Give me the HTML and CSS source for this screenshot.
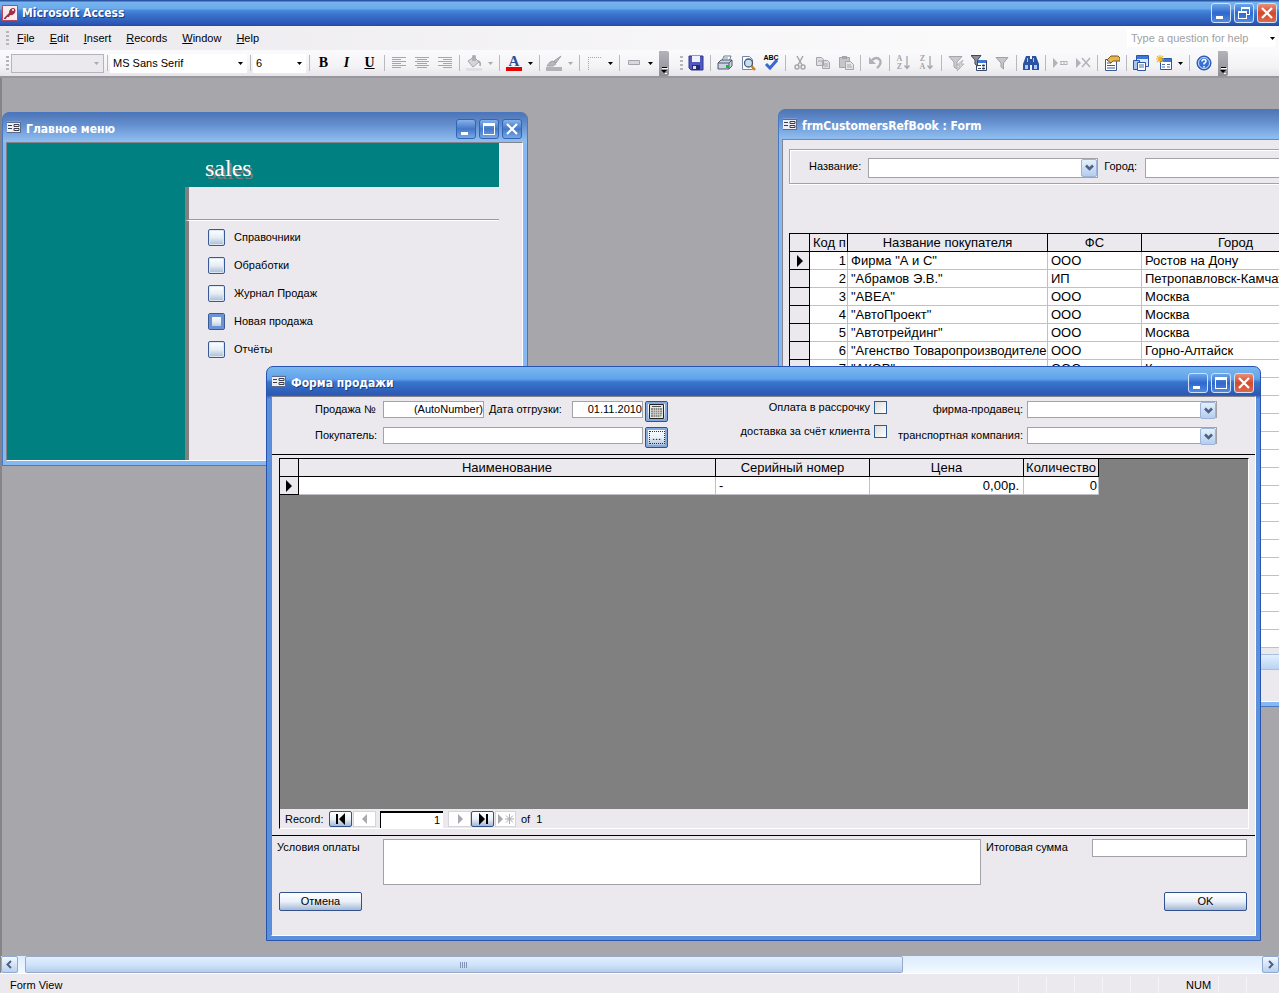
FILE: index.html
```html
<!DOCTYPE html>
<html lang="ru">
<head>
<meta charset="utf-8">
<title>Microsoft Access</title>
<link rel="stylesheet" href="styles.css">
</head>
<body>
<svg class="defs" aria-hidden="true">
  <symbol id="min" viewBox="0 0 20 20"><path d="M5 13h7v3H5z" fill="#fff"/></symbol>
  <symbol id="max" viewBox="0 0 20 20"><path d="M4 4h12v12H4zM5 7v8h10V7z" fill="#fff" fill-rule="evenodd"/></symbol>
  <symbol id="restore" viewBox="0 0 20 20"><path d="M7 4h9v8h-3v-1h2V6H8v2H7zM4 8h9v8H4zM5 10v5h7v-5z" fill="#fff" fill-rule="evenodd"/></symbol>
  <symbol id="close" viewBox="0 0 20 20"><path d="M5 5l10 10M15 5L5 15" stroke="#fff" stroke-width="2.200"/></symbol>
  <symbol id="form" viewBox="0 0 14 12"><path d="M0 0h14v12H0z" fill="#5d6c8c"/><path d="M0 2h13v9H0z" fill="#eeeef4"/><path d="M0 0h14v1H0z" fill="#7a9ad4"/><path d="M1 4.500h4M1 7.500h4M7 3.500h5v2H7zM7 7.500h5v2H7z" stroke="#3a3f4c" fill="none"/></symbol>
  <symbol id="chev" viewBox="0 0 15 15"><path d="M4 5.500l3.500 3.500L11 5.500" stroke="#4d6185" stroke-width="2.600" fill="none"/></symbol>
  <symbol id="caret" viewBox="0 0 5 3"><path d="M0 0h5L2.500 3z" fill="currentColor"/></symbol>
  <symbol id="more" viewBox="0 0 10 25"><path d="M3 16.500h5" stroke="#000"/><path d="M3 17.500h6M6 22.500h2" stroke="#fff"/><path d="M2 19h6l-3 3z" fill="#000"/></symbol>
  <symbol id="aleft" viewBox="0 0 16 16"><path d="M1 2.500h14M1 4.500h9M1 6.500h14M1 8.500h9M1 10.500h14M1 12.500h9" stroke="#a5a5ab"/></symbol>
  <symbol id="acenter" viewBox="0 0 16 16"><path d="M1 2.500h14M3 4.500h10M1 6.500h14M3 8.500h10M1 10.500h14M3 12.500h10" stroke="#a5a5ab"/></symbol>
  <symbol id="aright" viewBox="0 0 16 16"><path d="M1 2.500h14M6 4.500h9M1 6.500h14M6 8.500h9M1 10.500h14M6 12.500h9" stroke="#a5a5ab"/></symbol>
  <symbol id="bucket" viewBox="0 0 16 16"><path d="M2 6l6-4 5 5-6 5z" fill="#d5d5da" stroke="#a5a5ab"/><path d="M7 6V1h2v5M12 6q3 1 2 5" stroke="#a5a5ab" fill="none" stroke-width="1.500"/><path d="M0 13h16v3H0z" fill="#e0e0e4"/></symbol>
  <symbol id="brush" viewBox="0 0 16 16"><path d="M15 1L8 6l2 2zM7 6L4 7l-3 4h6l3-2z" fill="#b8b8be" stroke="#a0a0a6"/><path d="M0 12h16v4H0z" fill="#b2b2b8"/></symbol>
  <symbol id="border" viewBox="0 0 16 16"><path d="M2 2.500h13M2.500 2v13" stroke="#a5a5ab" stroke-dasharray="1 1" fill="none"/></symbol>
  <symbol id="effect" viewBox="0 0 16 16"><path d="M2.500 5.500h11v4h-11z" fill="#d8d8de" stroke="#a5a5ab"/></symbol>
  <symbol id="save" viewBox="0 0 16 16"><path d="M1 1h14v14H3l-2-2z" fill="#5159c0" stroke="#30368c"/><path d="M4 1h8v6H4z" fill="#eef2fc"/><path d="M4 10h8v5H4z" fill="#252a73"/><path d="M5 11h3v3H5z" fill="#dfe4fa"/></symbol>
  <symbol id="print" viewBox="0 0 16 16"><path d="M5 6l2-5h7l-2 6z" fill="#fff" stroke="#6d7b96"/><path d="M1 8l3-3h11v6l-3 3H1z" fill="#cbd4e2" stroke="#4e596e"/><path d="M1 8h11v6M12 8l3-3" stroke="#4e596e" fill="none"/><path d="M9 10h3v3H9z" fill="#22b333"/><path d="M7 3h4M6.500 5h4" stroke="#8694ad"/></symbol>
  <symbol id="preview" viewBox="0 0 16 16"><path d="M2.500 1.500h7l3 3v10h-10z" fill="#fff" stroke="#7484a8"/><circle cx="8.500" cy="8" r="4" fill="#c5e0f4" stroke="#4b5870" stroke-width="1.300"/><path d="M11.500 11l3.500 4" stroke="#c4822a" stroke-width="2.500"/></symbol>
  <symbol id="cut" viewBox="0 0 16 16"><path d="M5 1l5 9M11 1L6 10" stroke="#a5a5ab" stroke-width="1.500"/><circle cx="5" cy="12" r="2" fill="none" stroke="#a5a5ab" stroke-width="1.500"/><circle cx="11" cy="12" r="2" fill="none" stroke="#a5a5ab" stroke-width="1.500"/></symbol>
  <symbol id="copy" viewBox="0 0 16 16"><path d="M1.500 2.500h5l2 2v6h-7zM7.500 5.500h5l2 2v6h-7z" fill="#dedee2" stroke="#a5a5ab"/><path d="M3 6h4M9 9h4M9 11h4" stroke="#a5a5ab"/></symbol>
  <symbol id="paste" viewBox="0 0 16 16"><path d="M1.500 2.500h10v10h-10z" fill="#c5c5ca" stroke="#a5a5ab"/><path d="M4 1h5v3H4z" fill="#a5a5ab"/><path d="M7.500 6.500h5l3 3v5h-8z" fill="#e5e5e8" stroke="#a5a5ab"/><path d="M9 10h4M9 12h5" stroke="#a5a5ab"/></symbol>
  <symbol id="undo" viewBox="0 0 16 16"><path d="M5 5q5-4 8 0 2 4-3 8" stroke="#b0b0b8" stroke-width="2.300" fill="none"/><path d="M2 2v7h7z" fill="#b0b0b8"/></symbol>
  <symbol id="funbolt" viewBox="0 0 16 16"><path d="M1 1.500h13L9 7v7l-3-2V7z" fill="#c9c9ce" stroke="#a5a5ab"/><path d="M15 5l-6 5h3l-3 6 7-7h-3z" fill="#d5d5da" stroke="#a5a5ab" stroke-width=".7"/></symbol>
  <symbol id="funform" viewBox="0 0 16 16"><path d="M5.500 5.500h10v10h-10z" fill="#fff" stroke="#334766"/><path d="M6 5h9v3H6z" fill="#3d77d8"/><path d="M7 10.500h3M7 13.500h3M11.500 10h2v1h-2zM11.500 13h2v1h-2z" stroke="#334766"/><path d="M0 .5h10L6.500 5v6L4 9V5z" fill="#8b8f98" stroke="#44484f"/></symbol>
  <symbol id="funnel" viewBox="0 0 16 16"><path d="M2 2.500h12L9.500 8v6L7 12V8z" fill="#c5c5ca" stroke="#a0a0a6"/></symbol>
  <symbol id="find" viewBox="0 0 16 16"><path d="M3 1h4v3h2V1h4l3 8v6H9v-5H7v5H0V9z" fill="#2a52a0"/><path d="M2 10h3v4H2zM11 10h3v4h-3zM4 3h1v4H4zM10 3h1v4h-1z" fill="#a9c8f5"/></symbol>
  <symbol id="newrec" viewBox="0 0 16 16"><path d="M1 3l5 5-5 5z" fill="#b2b2b8"/><path d="M8 6.500h7M8 9.500h7M9 6v4M12 6v4M15 6v4" stroke="#b2b2b8"/></symbol>
  <symbol id="delrec" viewBox="0 0 16 16"><path d="M1 3l5 5-5 5z" fill="#b2b2b8"/><path d="M7 3l8 9M15 3l-8 9" stroke="#b2b2b8" stroke-width="1.500"/></symbol>
  <symbol id="props" viewBox="0 0 16 16"><path d="M1.500 4.500h11v11h-11z" fill="#fff" stroke="#3e5c94"/><path d="M3 8h4M3 10.500h8M3 13h8" stroke="#3e5c94"/><path d="M3 5l4-4h7l2 2v3H9L7 8z" fill="#e8b552" stroke="#7a5a1c"/></symbol>
  <symbol id="dbwin" viewBox="0 0 16 16"><path d="M3.500.5h12v11h-12z" fill="#dce9fb" stroke="#2d55a5"/><path d="M4 1h11v3H4z" fill="#3d77d8"/><path d="M.5 5.500h6v9h-6z" fill="#a8c6f4" stroke="#2d55a5"/><path d="M4.500 7.500h8v8h-8z" fill="#fff" stroke="#2d55a5"/><path d="M6 10h5M6 12h5" stroke="#4c6ea8"/></symbol>
  <symbol id="newobj" viewBox="0 0 16 16"><path d="M4.500 3.500h11v11h-11z" fill="#fff" stroke="#2d55a5"/><path d="M5 4h10v3H5z" fill="#3d77d8"/><path d="M6 9.500h3M11 9.500h3M6 12h3M11 12h3" stroke="#4c6ea8"/><path d="M4 0v8M0 4h8M1 1l6 6M7 1L1 7" stroke="#eeb622" stroke-width="1.200"/></symbol>
  <symbol id="help" viewBox="0 0 16 16"><circle cx="8" cy="8" r="7" fill="#3470d8" stroke="#1f4a9c"/><circle cx="8" cy="8" r="5.500" fill="none" stroke="#cfe0fb"/><path d="M6 6.500q0-2 2-2t2 1.700q0 1-2 2.300v1M8 11v1.500" stroke="#fff" stroke-width="1.500" fill="none"/></symbol>
  <symbol id="rowmark" viewBox="0 0 8 12"><path d="M1 0l6 6-6 6z"/></symbol>
  <symbol id="first" viewBox="0 0 12 12"><path d="M1 1h2v10H1zM10 0v12L4 6z" fill="currentColor"/></symbol>
  <symbol id="prev" viewBox="0 0 12 12"><path d="M8 1v10L3 6z" fill="currentColor"/></symbol>
  <symbol id="next" viewBox="0 0 12 12"><path d="M4 1v10l5-5z" fill="currentColor"/></symbol>
  <symbol id="last" viewBox="0 0 12 12"><path d="M9 1h2v10H9zM2 0v12l6-6z" fill="currentColor"/></symbol>
  <symbol id="addrec" viewBox="0 0 18 12"><path d="M1 1v10l5-5z" fill="currentColor"/><path d="M12.500 1v10M8 6h9M9 2.500l7 7M16 2.500l-7 7" stroke="currentColor"/></symbol>
</svg>

<div class="app">
  <header class="app-title">
    <svg class="app-icon" viewBox="0 0 16 16"><path d="M.5.5h15v15H.5z" fill="#fbe9ec" stroke="#b5485c"/><path d="M2 13l5-5q0-5 5-5 3 2 0 6-3 2-4 1l-1 2H5l-1 2H2z" fill="#9c3048"/><circle cx="11" cy="5" r="1" fill="#fff"/></svg>
    <h1>Microsoft Access</h1>
    <div class="wbtns">
      <button class="wbtn" aria-label="Minimize"><svg><use href="#min"/></svg></button>
      <button class="wbtn" aria-label="Restore"><svg><use href="#restore"/></svg></button>
      <button class="wbtn red" aria-label="Close"><svg><use href="#close"/></svg></button>
    </div>
  </header>

  <nav class="menubar">
    <span class="grip"></span>
    <button><u>F</u>ile</button><button><u>E</u>dit</button><button><u>I</u>nsert</button><button><u>R</u>ecords</button><button><u>W</u>indow</button><button><u>H</u>elp</button>
    <div class="ask"><input type="text" aria-label="Question" placeholder="Type a question for help"><svg class="caret"><use href="#caret"/></svg></div>
  </nav>

  <div class="toolbar">
    <span class="grip"></span>
    <div class="tcombo style off"><select aria-label="Object" disabled><option></option></select><svg class="caret"><use href="#caret"/></svg></div>
    <i class="sep"></i>
    <div class="tcombo face"><select aria-label="Font"><option>MS Sans Serif</option></select><svg class="caret"><use href="#caret"/></svg></div>
    <i class="sep"></i>
    <div class="tcombo size"><select aria-label="Font size"><option>6</option></select><svg class="caret"><use href="#caret"/></svg></div>
    <i class="sep"></i>
    <button class="tb letter">B</button><button class="tb letter italic">I</button><button class="tb letter under">U</button>
    <i class="sep"></i>
    <button class="tb" aria-label="Align left"><svg><use href="#aleft"/></svg></button><button class="tb" aria-label="Center"><svg><use href="#acenter"/></svg></button><button class="tb" aria-label="Align right"><svg><use href="#aright"/></svg></button>
    <i class="sep"></i>
    <button class="tb" aria-label="Fill color"><svg><use href="#bucket"/></svg></button><button class="drop off" aria-label="Fill list"><svg class="caret"><use href="#caret"/></svg></button>
    <i class="sep"></i>
    <button class="tb" aria-label="Font color"><svg viewBox="0 0 16 16"><text x="8" y="11" class="svg-a" text-anchor="middle">A</text><path d="M0 12h16v4H0z" fill="#e80000"/></svg></button><button class="drop" aria-label="Font color list"><svg class="caret"><use href="#caret"/></svg></button>
    <i class="sep"></i>
    <button class="tb" aria-label="Line color"><svg><use href="#brush"/></svg></button><button class="drop off" aria-label="Line color list"><svg class="caret"><use href="#caret"/></svg></button>
    <i class="sep"></i>
    <button class="tb" aria-label="Border"><svg><use href="#border"/></svg></button><button class="drop" aria-label="Border list"><svg class="caret"><use href="#caret"/></svg></button>
    <i class="sep"></i>
    <button class="tb" aria-label="Effect"><svg><use href="#effect"/></svg></button><button class="drop" aria-label="Effect list"><svg class="caret"><use href="#caret"/></svg></button>
    <button class="more" aria-label="Toolbar options"><svg><use href="#more"/></svg></button>
    <span class="grip second"></span>
    <button class="tb" aria-label="Save"><svg><use href="#save"/></svg></button>
    <i class="sep"></i>
    <button class="tb" aria-label="Print"><svg><use href="#print"/></svg></button><button class="tb" aria-label="Preview"><svg><use href="#preview"/></svg></button><button class="tb" aria-label="Spelling"><svg viewBox="0 0 16 16"><text x="8" y="5" class="svg-abc" text-anchor="middle">ABC</text><path d="M3 9l4 4 7-8" stroke="#356bd0" stroke-width="3" fill="none"/></svg></button>
    <i class="sep"></i>
    <button class="tb" aria-label="Cut"><svg><use href="#cut"/></svg></button><button class="tb" aria-label="Copy"><svg><use href="#copy"/></svg></button><button class="tb" aria-label="Paste"><svg><use href="#paste"/></svg></button>
    <i class="sep"></i>
    <button class="tb" aria-label="Undo"><svg><use href="#undo"/></svg></button>
    <i class="sep"></i>
    <button class="tb sort" aria-label="Sort ascending"><span><b>A</b><b>Z</b></span><svg viewBox="0 0 6 16"><path d="M3 1v12M.5 10.500l2.500 3 2.500-3" stroke="#a5a5ab" fill="none" stroke-width="1.300"/></svg></button><button class="tb sort" aria-label="Sort descending"><span><b>Z</b><b>A</b></span><svg viewBox="0 0 6 16"><path d="M3 1v12M.5 10.500l2.500 3 2.500-3" stroke="#a5a5ab" fill="none" stroke-width="1.300"/></svg></button>
    <i class="sep"></i>
    <button class="tb" aria-label="Filter by selection"><svg><use href="#funbolt"/></svg></button><button class="tb" aria-label="Filter by form"><svg><use href="#funform"/></svg></button><button class="tb" aria-label="Apply filter"><svg><use href="#funnel"/></svg></button>
    <i class="sep"></i>
    <button class="tb" aria-label="Find"><svg><use href="#find"/></svg></button>
    <i class="sep"></i>
    <button class="tb" aria-label="New record"><svg><use href="#newrec"/></svg></button><button class="tb" aria-label="Delete record"><svg><use href="#delrec"/></svg></button>
    <i class="sep"></i>
    <button class="tb" aria-label="Properties"><svg><use href="#props"/></svg></button>
    <i class="sep"></i>
    <button class="tb" aria-label="Database window"><svg><use href="#dbwin"/></svg></button><button class="tb" aria-label="New object"><svg><use href="#newobj"/></svg></button><button class="drop" aria-label="New object list"><svg class="caret"><use href="#caret"/></svg></button>
    <i class="sep"></i>
    <button class="tb" aria-label="Help"><svg><use href="#help"/></svg></button>
    <button class="more" aria-label="Toolbar options"><svg><use href="#more"/></svg></button>
  </div>

  <main class="desktop">
    <section class="win win-menu">
      <header class="wtitle"><svg class="wicon"><use href="#form"/></svg><h2>Главное меню</h2>
        <div class="wbtns"><button class="wbtn" aria-label="Minimize"><svg><use href="#min"/></svg></button><button class="wbtn" aria-label="Maximize"><svg><use href="#max"/></svg></button><button class="wbtn" aria-label="Close"><svg><use href="#close"/></svg></button></div>
      </header>
      <div class="wbody switchboard">
        <div class="sb-side"></div>
        <div class="sb-head">sales</div>
        <div class="sb-main">
          <div class="sb-gap"></div>
          <ul>
            <li><button id="m1"></button><label for="m1">Справочники</label></li>
            <li><button id="m2"></button><label for="m2">Обработки</label></li>
            <li><button id="m3"></button><label for="m3">Журнал Продаж</label></li>
            <li><button id="m4" class="focused"></button><label for="m4">Новая продажа</label></li>
            <li><button id="m5"></button><label for="m5">Отчёты</label></li>
          </ul>
        </div>
      </div>
    </section>

    <section class="win win-ref">
      <header class="wtitle"><svg class="wicon"><use href="#form"/></svg><h2>frmCustomersRefBook : Form</h2></header>
      <div class="wbody ref-body">
        <div class="ref-filter">
          <label for="rname">Название:</label>
          <div class="combo"><select id="rname"><option></option></select><span class="arrow"><svg><use href="#chev"/></svg></span></div>
          <label for="rcity">Город:</label>
          <input id="rcity" type="text">
        </div>
        <div class="ref-grid">
          <table class="grid">
            <colgroup><col class="c-sel"><col class="c-code"><col class="c-name"><col class="c-fs"><col class="c-city"></colgroup>
            <thead><tr><th></th><th class="clip">Код п</th><th>Название покупателя</th><th>ФС</th><th>Город</th></tr></thead>
            <tbody>
              <tr><th><svg class="mark"><use href="#rowmark"/></svg></th><td class="num">1</td><td>Фирма "А и С"</td><td>ООО</td><td>Ростов на Дону</td></tr>
              <tr><th></th><td class="num">2</td><td>"Абрамов Э.В."</td><td>ИП</td><td>Петропавловск-Камчатский</td></tr>
              <tr><th></th><td class="num">3</td><td>"АВЕА"</td><td>ООО</td><td>Москва</td></tr>
              <tr><th></th><td class="num">4</td><td>"АвтоПроект"</td><td>ООО</td><td>Москва</td></tr>
              <tr><th></th><td class="num">5</td><td>"Автотрейдинг"</td><td>ООО</td><td>Москва</td></tr>
              <tr><th></th><td class="num">6</td><td>"Агенство Товаропроизводителе</td><td>ООО</td><td>Горно-Алтайск</td></tr>
              <tr><th></th><td class="num">7</td><td>"АКОР"</td><td>ООО</td><td>Казань</td></tr>
              <tr><th></th><td></td><td></td><td></td><td></td></tr><tr><th></th><td></td><td></td><td></td><td></td></tr>
              <tr><th></th><td></td><td></td><td></td><td></td></tr><tr><th></th><td></td><td></td><td></td><td></td></tr>
              <tr><th></th><td></td><td></td><td></td><td></td></tr><tr><th></th><td></td><td></td><td></td><td></td></tr>
              <tr><th></th><td></td><td></td><td></td><td></td></tr><tr><th></th><td></td><td></td><td></td><td></td></tr>
              <tr><th></th><td></td><td></td><td></td><td></td></tr><tr><th></th><td></td><td></td><td></td><td></td></tr>
              <tr><th></th><td></td><td></td><td></td><td></td></tr><tr><th></th><td></td><td></td><td></td><td></td></tr>
              <tr><th></th><td></td><td></td><td></td><td></td></tr><tr><th></th><td></td><td></td><td></td><td></td></tr>
              <tr><th></th><td></td><td></td><td></td><td></td></tr>
            </tbody>
          </table>
          <div class="ref-scroll"></div>
        </div>
      </div>
    </section>

    <section class="win win-sale active">
      <header class="wtitle"><svg class="wicon"><use href="#form"/></svg><h2>Форма продажи</h2>
        <div class="wbtns"><button class="wbtn" aria-label="Minimize"><svg><use href="#min"/></svg></button><button class="wbtn" aria-label="Maximize"><svg><use href="#max"/></svg></button><button class="wbtn red" aria-label="Close"><svg><use href="#close"/></svg></button></div>
      </header>
      <form class="wbody sale">
        <div class="sale-head">
          <div class="sale-left">
            <label for="no">Продажа №</label><input id="no" class="num" type="text" value="(AutoNumber)">
            <label for="date" class="mid">Дата отгрузки:</label><input id="date" class="num" type="text" value="01.11.2010">
            <button type="button" class="xp pick" aria-label="Calendar"><svg class="cal" viewBox="0 0 15 15"><path d="M.5.5h14v14H.5z" fill="#e6e6e0" stroke="#222"/><path d="M3 2.500h9" stroke="#555"/><path d="M2 4h11v7l-2 2H2z" fill="#8a8a88"/><path d="M2 6.500h11M2 8.500h11M2 10.500h11M4.500 4v9M6.500 4v9M8.500 4v9M10.500 4v9" stroke="#dcdcd6" stroke-width=".6"/></svg></button>
            <label for="buyer">Покупатель:</label><input id="buyer" class="wide" type="text">
            <button type="button" class="xp pick dots" aria-label="Choose"><span>...</span></button>
          </div>
          <div class="sale-checks">
            <label>Оплата в рассрочку<input type="checkbox"></label>
            <label>доставка за счёт клиента<input type="checkbox"></label>
          </div>
          <div class="sale-right">
            <label for="seller">фирма-продавец:</label><div class="combo"><select id="seller"><option></option></select><span class="arrow"><svg><use href="#chev"/></svg></span></div>
            <label for="carrier">транспортная компания:</label><div class="combo"><select id="carrier"><option></option></select><span class="arrow"><svg><use href="#chev"/></svg></span></div>
          </div>
        </div>
        <div class="subwrap">
          <div class="subform">
            <div class="sheet">
              <table class="grid">
                <colgroup><col class="s-sel"><col class="s-name"><col class="s-ser"><col class="s-price"><col class="s-qty"></colgroup>
                <thead><tr><th></th><th>Наименование</th><th>Серийный номер</th><th>Цена</th><th>Количество</th></tr></thead>
                <tbody><tr><th><svg class="mark"><use href="#rowmark"/></svg></th><td></td><td>-</td><td class="num price">0,00р.</td><td class="num">0</td></tr></tbody>
              </table>
            </div>
            <div class="recnav">
              <label for="rec">Record:</label>
              <button type="button" class="xp" aria-label="First"><svg><use href="#first"/></svg></button>
              <button type="button" class="flat" aria-label="Previous"><svg><use href="#prev"/></svg></button>
              <input id="rec" type="text" value="1">
              <button type="button" class="flat" aria-label="Next"><svg><use href="#next"/></svg></button>
              <button type="button" class="xp" aria-label="Last"><svg><use href="#last"/></svg></button>
              <button type="button" class="flat add" aria-label="New"><svg><use href="#addrec"/></svg></button>
              <span>of&nbsp; 1</span>
            </div>
          </div>
        </div>
        <div class="sale-foot">
          <div class="foot-row">
            <label for="terms">Условия оплаты</label><textarea id="terms"></textarea>
            <label for="total" class="total">Итоговая сумма</label><input id="total" type="text">
          </div>
          <div class="foot-btns"><button type="button" class="xp cmd">Отмена</button><button type="button" class="xp cmd">OK</button></div>
        </div>
      </form>
    </section>
  </main>

  <div class="hscroll">
    <button class="sbtn" aria-label="Scroll left"><svg viewBox="0 0 15 15"><path d="M9 4L5.500 7.500 9 11" stroke="#4d6185" stroke-width="2" fill="none"/></svg></button>
    <div class="track"><div class="thumb"><i></i></div></div>
    <button class="sbtn" aria-label="Scroll right"><svg viewBox="0 0 15 15"><path d="M6 4l3.500 3.500L6 11" stroke="#4d6185" stroke-width="2" fill="none"/></svg></button>
  </div>
  <footer class="status"><span>Form View</span><div class="cells"><i></i><i></i><i></i><i></i><i></i><i></i><b>NUM</b><i></i><i></i></div></footer>
</div>
</body>
</html>
```
FILE: styles.css
```css
* { box-sizing: border-box; }
body { margin: 0; font: 11px/13px "Liberation Sans", Arial, sans-serif; color: #000; background: #ebe9ed; }
button, input, select, textarea { font: inherit; color: inherit; margin: 0; padding: 0; border: 0; border-radius: 0; outline: 0; background: none; }
select { appearance: none; }
svg { display: block; }
h1, h2 { margin: 0; font: bold 12px/16px "DejaVu Sans Condensed", "DejaVu Sans", sans-serif; color: #fff; white-space: nowrap; }
label { white-space: nowrap; }
.defs { position: absolute; width: 0; height: 0; }
.app { height: 100vh; display: flex; flex-direction: column; overflow: hidden; }

/* application title */
.app-title { height: 26px; flex: none; display: flex; align-items: center; padding: 0 2px; gap: 4px; background: linear-gradient(#2c55a5 0, #2c55a5 1px, #76b4ee 2px, #6aa9ea 9px, #4a8be0 10px, #3a75ce 14px, #2b56b4 24px, #26489c 26px); }
.app-title h1, .active h2 { text-shadow: 1px 1px 0 #1c3a80; }
.app-icon { width: 16px; height: 16px; }
.wbtns { margin-left: auto; display: flex; gap: 3px; }
.app-title .wbtns { padding-right: 0; }
.wbtn { width: 20px; height: 20px; border: 1px solid #cfe2fa; border-radius: 3px; background: linear-gradient(#6ea6ea, #2f68cc 50%, #4f8ae2); }
.wbtn svg { width: 20px; height: 20px; margin: -1px; }
.wbtn.red { background: linear-gradient(#e8907a, #d2492c 50%, #e0684a); }

/* menu and toolbar */
.menubar { height: 24px; flex: none; display: flex; align-items: center; padding: 0 4px 0 6px; background: linear-gradient(90deg, #ebe9ed, #fbfafb 75%); }
.grip { width: 3px; height: 14px; flex: none; background: repeating-linear-gradient(#b5b5bb 0 2px, transparent 2px 4px); }
.menubar button { padding: 0 7px 0 8px; height: 20px; }
.ask { margin-left: auto; width: 148px; height: 18px; display: flex; align-items: center; background: #fff; }
.ask input { flex: 1; min-width: 0; padding-left: 4px; }
.ask input::placeholder { color: #a09fa5; opacity: 1; }
.caret { width: 5px; height: 3px; color: #000; flex: none; }
.toolbar { height: 28px; flex: none; display: flex; align-items: center; padding: 0 0 2px 6px; background: linear-gradient(#fbfafc, #f3f2f5 60%, #e6e4e9 26px, #98979d 26px); }
.sep { width: 6px; height: 16px; flex: none; background: linear-gradient(#b9b8be, #b9b8be) 3px 0 / 1px 100% no-repeat; }
.tb { width: 23px; height: 23px; flex: none; display: grid; place-items: center; }
.tb svg { width: 16px; height: 16px; }
.letter { font: bold 14px/16px "Liberation Serif", serif; }
.italic { font-style: italic; }
.under { text-decoration: underline; }
.sort { display: flex; align-items: center; justify-content: center; gap: 2px; color: #a5a5ab; }
.sort span { display: flex; flex-direction: column; }
.sort b { font: bold 8px/8px "Liberation Serif", serif; }
.sort svg { width: 6px; height: 16px; }
.drop { width: 11px; height: 23px; flex: none; display: grid; place-items: center; }
.off .caret { color: #aaa9af; }
.more { width: 10px; height: 25px; flex: none; margin-left: 3px; border-radius: 0 2px 2px 0; background: linear-gradient(#b4b3b9, #8f8e94); }
.more svg { width: 10px; height: 25px; }
.second { margin: 0 1px 0 11px; }
.tcombo { height: 19px; flex: none; display: flex; align-items: center; background: #fff; padding-right: 4px; }
.tcombo select { flex: 1; min-width: 0; padding-left: 3px; opacity: 1; }
.style { width: 93px; margin: 0 0 0 2px; border: 1px solid #b5b4ba; background: #ebe9ed; }
.face { width: 137px; }
.size { width: 53px; }
.svg-a { font: bold 15px "Liberation Serif", serif; fill: #2d4f94; }
.svg-abc { font: bold 7px "Liberation Sans", sans-serif; }

/* desktop and child windows */
.desktop { flex: 1; min-height: 0; position: relative; overflow: hidden; background: #a7a6aa; border-left: 2px solid #858489; }
.win { position: absolute; display: flex; flex-direction: column; padding: 0 4px 4px 3px; border: 1px solid #4a78c0; border-radius: 7px 7px 0 0; background: linear-gradient(#4f75b5 0, #6490cf 12px, #8fbdf0 28px, #86b8f2 30px); }
.win.active { padding-left: 4px; border-color: #2853ae; background: linear-gradient(#7ab8ee 0, #60a3ec 12px, #3876cc 15px, #2c57b3 28px, #5a90dc 32px); }
.wtitle { height: 29px; flex: none; display: flex; align-items: center; gap: 5px; padding: 2px 0 0 1px; }
.wicon { width: 14px; height: 12px; margin-bottom: 3px; }
.win:not(.active) .wbtn { border-color: #3465b5; background: linear-gradient(#85b2ea, #4577c8 50%, #76a8e8); }
.wbody { flex: 1; min-height: 0; background: #ebe9ed; border: solid; border-width: 1px; border-color: #85848a #fff #fff #85848a; }
.win-menu { left: 0; top: 34px; width: 526px; height: 354px; }
.win-ref { left: 776px; top: 31px; width: 620px; height: 598px; }
.win-sale { left: 264px; top: 288px; width: 995px; height: 575px; }
.win-menu .wbtns { padding-right: 1px; }
.win-sale .wbtns { padding-right: 2px; }

.switchboard { display: grid; grid-template: 44px 1fr / 178px 1fr 23px; }
.sb-side { grid-row: 1 / 3; background: #008080; }
.sb-head { background: #008080; color: #fff; font: 24px/40px "Liberation Serif", serif; padding: 5px 0 0 20px; text-shadow: 2px 3px 0 #7b8080; height: 44px; }
.sb-main { grid-column: 2; border-left: 4px solid #808080; }
.sb-gap { height: 34px; margin-left: -4px; border-left: 4px solid #808080; border-bottom: 1px solid #fff; box-shadow: inset 0 -1px #9c9ba0; margin-bottom: 2px; }
.switchboard ul { list-style: none; margin: 0; padding: 0 0 0 19px; }
.switchboard li { display: flex; align-items: center; gap: 9px; height: 28px; }
.switchboard li button { width: 17px; height: 17px; border: 1px solid #3a5a96; border-radius: 2px; background: linear-gradient(#fff, #e6edf6 50%, #a9bad2); box-shadow: inset 0 0 0 1px #dbe6f5; }
.switchboard li .focused { box-shadow: inset 0 0 0 3px #6b93d6; }

input[type=text], textarea, .combo { background: #fff; border: 1px solid #a3a2a8; }
.ask input[type=text] { border: 0; }
.combo { display: grid; }
.combo select { grid-area: 1 / 1; width: 100%; height: 100%; }
.arrow { grid-area: 1 / 1; justify-self: end; align-self: stretch; width: 16px; display: grid; place-items: center; border: 1px solid #9bb4d8; border-radius: 2px; background: linear-gradient(#e6f0fc, #b4cdee); pointer-events: none; }
.arrow svg { width: 15px; height: 15px; }

.ref-body { padding: 9px 0 0 6px; overflow: hidden; }
.ref-filter { display: flex; align-items: center; height: 35px; padding-left: 19px; border: 1px solid #a3a2a8; box-shadow: inset 1px 1px #fff, 0 1px #fff; }
.ref-filter .combo { width: 230px; height: 20px; margin: 2px 6px 0 7px; }
.ref-filter input { flex: 1; height: 20px; margin: 2px 0 0 8px; }
.ref-grid { margin-top: 49px; border: solid #000; border-width: 1px 0 0 1px; }
.ref-scroll { height: 16px; margin-top: 6px; border: solid #a9bfdf; border-width: 1px 0; background: linear-gradient(#e2effd, #b9d3f2); }

.grid { border-collapse: separate; border-spacing: 0; table-layout: fixed; width: 0; font-size: 13px; line-height: 17px; background: #fff; }
.grid th, .grid td { height: 18px; padding: 0 3px; white-space: nowrap; overflow: hidden; text-align: left; font-weight: normal; border: solid #c1c0c6; border-width: 0 1px 1px 0; }
.grid th { border-color: #000; background: #ebe9ed; text-align: center; padding: 0; }
.grid th.clip { text-align: left; padding-left: 3px; }
.grid .num { text-align: right; padding-right: 1px; }
.grid .price { padding-right: 4px; }
.mark { width: 8px; height: 12px; margin: 0 auto; }
.c-sel { width: 20px; } .c-code { width: 38px; } .c-name { width: 200px; } .c-fs { width: 94px; } .c-city { width: 188px; }

/* sale form */
.sale { display: flex; flex-direction: column; }
.sale-head { flex: none; height: 58px; display: flex; padding: 4px 38px 0 43px; border-bottom: 1px solid #000; }
.sale-left { display: grid; grid-template: 17px 17px / 68px 101px 88px 71px 24px; row-gap: 9px; }
.sale-left label { line-height: 16px; }
.sale-left .mid { padding-left: 5px; }
.sale-left .wide { grid-column: 2 / 5; }
.sale-left input { min-width: 0; }
.num { text-align: right; }
.xp { display: grid; place-items: center; border: 1px solid #31518f; border-radius: 2px; background: linear-gradient(#fff, #eaf1f9 50%, #a4b8d4); }
.pick { width: 23px; height: 21px; margin-left: 2px; box-shadow: inset 0 0 0 2px #85a9df; }
.cal { width: 15px; height: 15px; }
.dots span { width: 16px; height: 13px; border: 1px dotted #333; line-height: 8px; }
.sale-checks { margin-left: auto; display: flex; flex-direction: column; gap: 11px; }
.sale-checks label { display: flex; justify-content: flex-end; align-items: center; gap: 4px; height: 13px; }
.sale-checks input { appearance: none; width: 13px; height: 13px; border: 1px solid #2c5a94; background: linear-gradient(135deg, #dcdcd8, #fff); }
.sale-right { display: grid; grid-template: 17px 17px / 136px 190px; gap: 9px 4px; }
.sale-right label { text-align: right; line-height: 16px; }
.subwrap { flex: 1; min-height: 0; padding: 3px 6px 6px 7px; border-bottom: 1px solid #000; display: flex; }
.subform { flex: 1; display: flex; flex-direction: column; border: 1px solid; border-color: #000 #fff #fff #000; }
.sheet { flex: 1; background: #808080; }
.s-sel { width: 19px; } .s-name { width: 417px; } .s-ser { width: 154px; } .s-price { width: 154px; } .s-qty { width: 75px; }
.recnav { height: 19px; display: flex; align-items: center; padding: 1px 0 0 5px; }
.recnav label { width: 44px; }
.recnav button { width: 23px; height: 16px; display: grid; place-items: center; }
.recnav svg { width: 12px; height: 12px; }
.flat { background: #fff; border: 1px solid #d5d4da; color: #aaa9af; margin-left: 1px; }
.recnav .add { width: 21px; }
.recnav .add svg { width: 18px; }
.recnav input[type=text] { width: 63px; height: 17px; border: solid #000; border-width: 2px 0 0 1px; margin: 0 4px 0 4px; padding-right: 3px; text-align: right; }
.recnav span { margin-left: 5px; }
.sale-foot { flex: none; height: 99px; padding: 3px 8px 0 5px; }
.foot-row { display: flex; align-items: flex-start; }
.foot-row label { width: 106px; padding-top: 2px; }
.foot-row textarea { flex: 1; height: 46px; resize: none; }
.foot-row .total { padding-left: 5px; width: 111px; }
.foot-row input { width: 155px; height: 18px; }
.foot-btns { display: flex; justify-content: space-between; padding: 7px 0 0 2px; }
.cmd { width: 83px; height: 19px; }

/* bottom bars */
.hscroll { flex: none; height: 17px; display: flex; background: #e3effd; border-left: 1px solid #858489; }
.sbtn { width: 17px; height: 17px; border: 1px solid #8fa9cf; border-radius: 2px; background: linear-gradient(#f2f8ff, #b9d0ee); }
.sbtn svg { width: 15px; height: 15px; }
.track { flex: 1; padding-left: 7px; background: linear-gradient(#dcecfd, #f3f9ff); }
.thumb { width: 71%; height: 17px; border: 1px solid #97aac8; border-radius: 2px; background: linear-gradient(#e3effd, #cfe3fa 50%, #b4cdeb); display: grid; place-items: center; }
.thumb i { width: 8px; height: 6px; background: repeating-linear-gradient(90deg, #7d93b5 0 1px, transparent 1px 2px); }
.status { flex: none; height: 20px; display: flex; align-items: center; padding: 3px 5px 0 10px; border-top: 1px solid #fff; }
.cells { margin-left: auto; display: flex; align-items: center; }
.cells i { width: 28px; height: 16px; border-left: 1px solid #f5f4f6; }
.cells b { font-weight: normal; width: 32px; }
```
